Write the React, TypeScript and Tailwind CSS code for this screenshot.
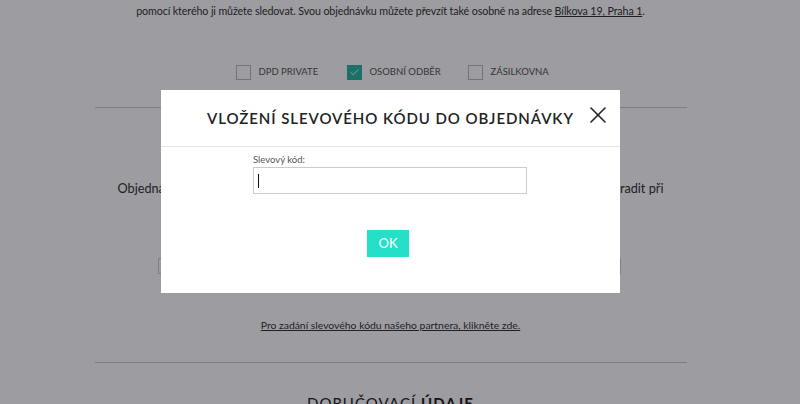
import { X, Check } from "lucide-react";

function Box({ checked, label, w }: { checked?: boolean; label: string; w: string }) {
  return (
    <div className={`flex items-center gap-2 ${w}`}>
      <span
        className={
          checked
            ? "w-[15px] h-[15px] flex items-center justify-center bg-[#2bb5a3] border border-[#2bb5a3]"
            : "w-[15px] h-[15px] border border-[#bbb] bg-white"
        }
      >
        {checked && <Check className="w-[11px] h-[11px] text-white" strokeWidth={2} />}
      </span>
      <span className="text-[9.5px] text-[#555]">{label}</span>
    </div>
  );
}

export default function App() {
  return (
    <div className="relative w-[800px] h-[404px] overflow-hidden bg-white font-['Lato','Liberation_Sans',sans-serif]">
      {/* Page underneath */}
      <div className="w-[781px] flex flex-col items-center">
        <p className="mt-[3px] text-[10.7px] text-[#333] tracking-[-0.01em] whitespace-nowrap">
          pomocí kterého ji můžete sledovat. Svou objednávku můžete převzít také osobně na adrese{" "}
          <span className="underline">Bílkova 19, Praha 1</span>.
        </p>

        <div className="mt-[46px] flex items-center pl-[10px]">
          <Box w="w-[111px]" label="DPD PRIVATE" />
          <Box w="w-[121px]" checked label="OSOBNÍ ODBĚR" />
          <Box w="w-[88px]" label="ZÁSILKOVNA" />
        </div>

        <div className="mt-[27px] w-[592px] h-px bg-[#ccc]" />

        <p className="mt-[71px] text-center text-[12.7px] text-[#333] leading-[18px] whitespace-nowrap">
          Objednávku můžete zaplatit předem bankovním převodem, platební kartou, nebo ji také uhradit při
        </p>

        <div className="mt-[61px] ml-[-2px] w-[463px] h-[16px] border border-[#ccc]" />

        <a className="mt-[44px] text-[10.4px] text-[#333] underline">
          Pro zadání slevového kódu našeho partnera, klikněte zde.
        </a>

        <div className="mt-[28px] w-[592px] h-px bg-[#ccc]" />

        <h2 className="mt-[29px] text-[15px] tracking-[0.07em] text-[#222] whitespace-nowrap">
          DORUČOVACÍ <span className="font-bold">ÚDAJE</span>
        </h2>
      </div>

      {/* Overlay */}
      <div className="absolute inset-0 bg-[rgba(2,3,12,0.39)]" />

      {/* Modal */}
      <div className="absolute left-[161px] top-[90px] w-[459px] h-[203px] bg-white flex flex-col">
        <div className="h-[57px] flex items-center border-b border-[#e3e3e3] relative">
          <h1 className="pl-[46px] text-[15px] font-semibold tracking-[0.062em] text-[#222] whitespace-nowrap">
            VLOŽENÍ SLEVOVÉHO KÓDU DO OBJEDNÁVKY
          </h1>
          <X className="absolute left-[423px] top-[11px] w-[28px] h-[28px] text-[#222]" strokeWidth={1.4} />
        </div>
        <div className="flex flex-col items-start pl-[92px] pt-[6px]">
          <label className="text-[9.5px] text-[#555]">Slevový kód:</label>
          <div className="w-[274px] h-[27px] border border-[#ccc] flex items-center pl-[4px]">
            <span className="w-px h-[14px] bg-[#111]" />
          </div>
        </div>
        <div className="flex justify-center pt-[36px] pr-[5px]">
          <button className="w-[42px] h-[27px] bg-[#24e0c9] text-white text-[13px]">OK</button>
        </div>
      </div>
    </div>
  );
}
